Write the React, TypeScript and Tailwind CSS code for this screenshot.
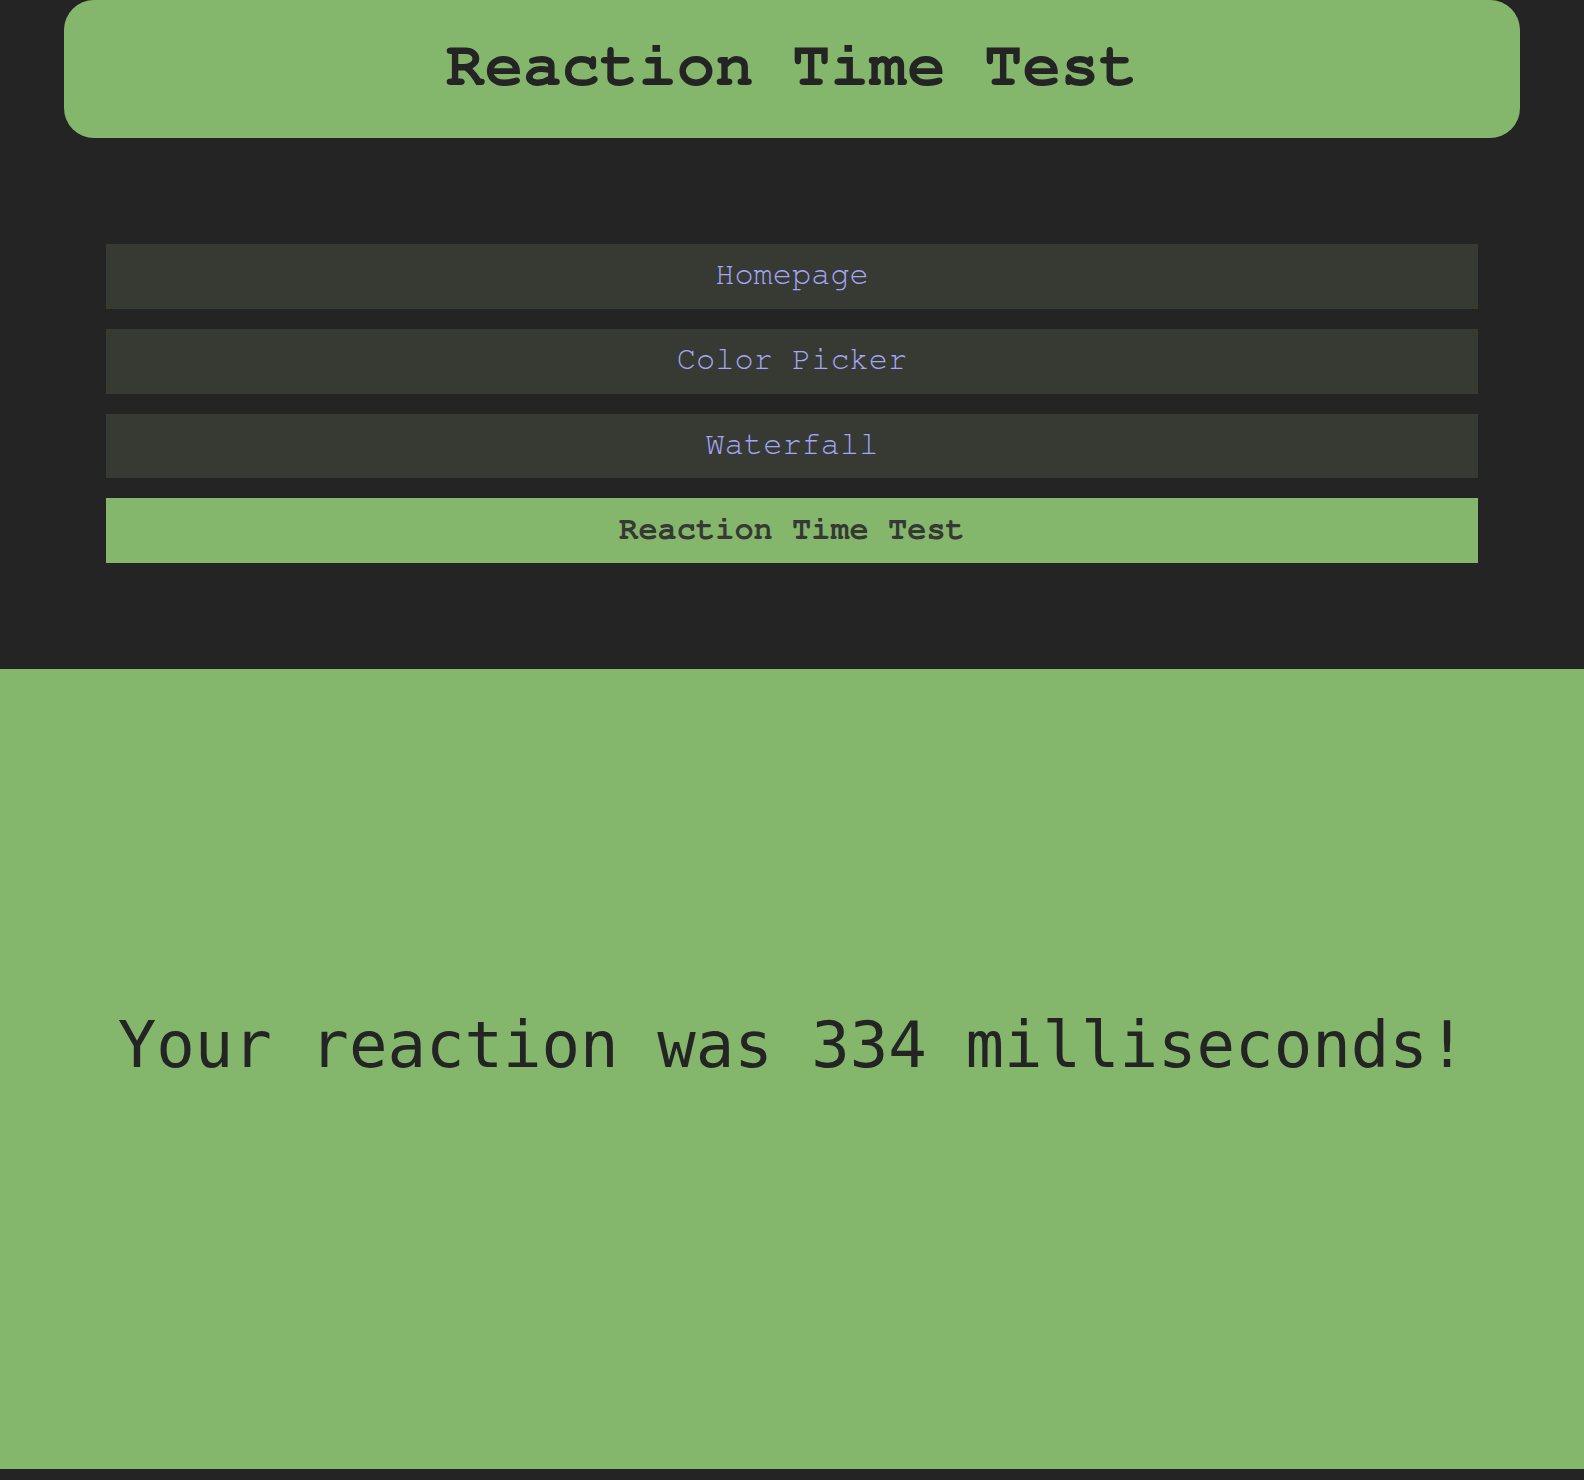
import React from "react";

const mono = { fontFamily: '"Nimbus Mono PS", "Nimbus Mono L", FreeMono, Courier, "Courier New", "Liberation Mono", monospace' };

export default function App() {
  const items = ["Homepage", "Color Picker", "Waterfall"];
  return (
    <div className="min-h-screen w-full bg-[#242424]">
      <header className="mx-16 h-[138px] rounded-[30px] bg-[#84b76c] flex items-center justify-center pb-[6px]">
        <h1 className="text-[64px] font-bold text-[#242424] leading-normal" style={mono}>
          Reaction Time Test
        </h1>
      </header>
      <nav className="px-[106px] py-[106px] flex flex-col gap-[20px]">
        {items.map((t) => (
          <div
            key={t}
            className="h-[64.8px] bg-[#373a33] flex items-center justify-center text-[32px] text-[#a5a5fa] pb-[4px]"
            style={mono}
          >
            {t}
          </div>
        ))}
        <div
          className="h-[64.8px] bg-[#84b76c] flex items-center justify-center text-[32px] font-bold text-[#363833] pb-[4px]"
          style={mono}
        >
          Reaction Time Test
        </div>
      </nav>
      <section className="h-[800px] bg-[#84b76c] flex items-center justify-center pb-[48px]">
        <p
          className="text-[64px] text-[#242424] leading-normal"
          style={{ fontFamily: '"DejaVu Sans Mono", monospace' }}
        >
          Your reaction was 334 milliseconds!
        </p>
      </section>
    </div>
  );
}
